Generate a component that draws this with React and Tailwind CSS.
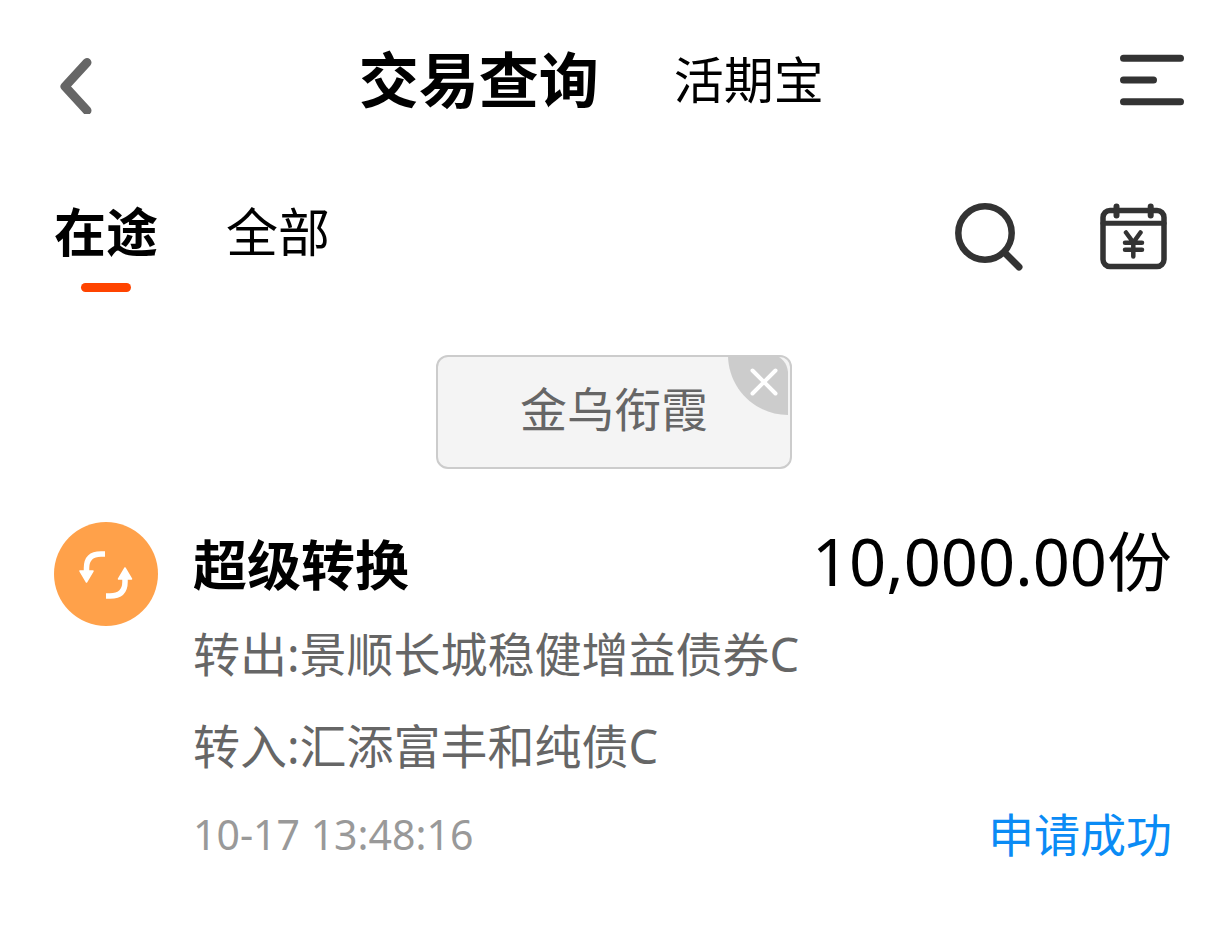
function BackIcon() {
  return (
    <svg width="32" height="68" viewBox="0 0 32 68" fill="none" stroke="#666" strokeWidth="9" strokeLinecap="round" strokeLinejoin="round" aria-hidden="true">
      <path d="M27 16.500 5 40.500 27 64.500" />
    </svg>
  );
}

function MenuIcon() {
  return (
    <svg width="64" height="52" viewBox="0 0 64 52" fill="none" stroke="#333" strokeWidth="7" strokeLinecap="round" aria-hidden="true">
      <path d="M3.500 4.300h57M3.500 26h30M3.500 47.700h57" />
    </svg>
  );
}

function SearchIcon() {
  return (
    <svg width="70" height="70" viewBox="0 0 70 70" fill="none" stroke="#333" strokeLinecap="round" aria-hidden="true">
      <circle cx="31" cy="31" r="26.700" strokeWidth="6.500" />
      <path d="M51 51 65 65" strokeWidth="7" />
    </svg>
  );
}

function CalendarIcon() {
  return (
    <svg width="70" height="70" viewBox="0 0 70 70" fill="none" stroke="#333" strokeLinecap="round" strokeLinejoin="round" aria-hidden="true">
      <rect x="4" y="8.500" width="61" height="56" rx="7" strokeWidth="5.500" />
      <path d="M4 21.300h61" strokeWidth="5" />
      <path d="M17.500 4.500v9M51.700 4.500v9" strokeWidth="6" />
      <path d="M27 30.500 34.300 40.500 41.500 30.500M34.300 40.500V54.500M26 40.800h17M26 47.800h17" strokeWidth="4.500" />
    </svg>
  );
}

function CornerCloseIcon() {
  return (
    <svg width="60" height="60" viewBox="0 0 60 60" fill="none" aria-hidden="true">
      <path d="M0 0H46C54 2 59 8 60 17V60C27 60 0 33 0 0Z" fill="#ccc" />
      <path d="M24.500 15.500 47.500 38.500M47.500 15.500 24.500 38.500" stroke="#fff" strokeWidth="4" strokeLinecap="round" />
    </svg>
  );
}

function ConvertIcon() {
  return (
    <svg className="shrink-0" width="104" height="104" viewBox="0 0 104 104" fill="none" aria-hidden="true">
      <circle cx="52" cy="52" r="52" fill="#ffa14a" />
      <path d="M51 32H47Q32.500 32 32.500 46V50" stroke="#fff" strokeWidth="5.500" />
      <path d="M26 49H39L32.500 60Z" fill="#fff" stroke="#fff" strokeWidth="1.500" strokeLinejoin="round" />
      <path d="M52 74H56Q71 74 71 60V56" stroke="#fff" strokeWidth="5.500" />
      <path d="M64.500 57H77.500L71 46Z" fill="#fff" stroke="#fff" strokeWidth="1.500" strokeLinejoin="round" />
    </svg>
  );
}

export default function App() {
  return (
    <div className="min-h-screen bg-white font-['Noto_Sans','Noto_Sans_CJK_SC',sans-serif] text-black">
      <header className="flex h-40 items-center pr-11 pl-[60px]">
        <button type="button" aria-label="返回"><BackIcon /></button>
        <div className="flex-[9]" />
        <nav className="flex items-center gap-[75px] whitespace-nowrap">
          <button type="button" className="text-[60px] leading-[72px] font-bold">交易查询</button>
          <button type="button" className="text-[50px] leading-[60px]">活期宝</button>
        </nav>
        <div className="flex-[10]" />
        <button type="button" aria-label="菜单"><MenuIcon /></button>
      </header>

      <div className="flex items-start justify-between pt-10 pr-[59px] pl-[54px]">
        <div className="flex gap-[68px] text-[52px] leading-[64px] whitespace-nowrap">
          <button type="button" className="flex flex-col items-center font-bold">
            在途
            <span className="mt-[19px] h-[9px] w-[50px] rounded-full bg-[#ff4400]" />
          </button>
          <button type="button" className="self-start">全部</button>
        </div>
        <div className="flex gap-[75px] pt-0.5">
          <button type="button" aria-label="搜索"><SearchIcon /></button>
          <button type="button" aria-label="交易日历"><CalendarIcon /></button>
        </div>
      </div>

      <div className="mt-[63px] flex justify-center">
        <div className="relative rounded-xl border-2 border-[#ccc] bg-[#f4f4f4] px-[82px] pt-[22px] pb-7 text-[47px] leading-[60px] text-[#666]">
          金乌衔霞
          <button type="button" aria-label="移除" className="absolute -top-0.5 right-0.5"><CornerCloseIcon /></button>
        </div>
      </div>

      <main className="mt-[53px] flex gap-[35px] pr-14 pb-16 pl-[54px]">
        <ConvertIcon />
        <article className="min-w-0 flex-1">
          <div className="flex items-baseline justify-between leading-[78px] whitespace-nowrap">
            <h2 className="text-[54px] font-bold">超级转换</h2>
            <p className="text-[65px]">10,000.00份</p>
          </div>
          <p className="mt-5 text-[47px] leading-[60px] text-[#666]">转出:景顺长城稳健增益债券C</p>
          <p className="mt-8 text-[47px] leading-[60px] text-[#666]">转入:汇添富丰和纯债C</p>
          <div className="mt-7 flex items-center justify-between leading-[60px] whitespace-nowrap">
            <time className="text-[41px] text-[#999]">10-17 13:48:16</time>
            <span className="text-[46px] text-[#0a8bf5]">申请成功</span>
          </div>
        </article>
      </main>
    </div>
  );
}
